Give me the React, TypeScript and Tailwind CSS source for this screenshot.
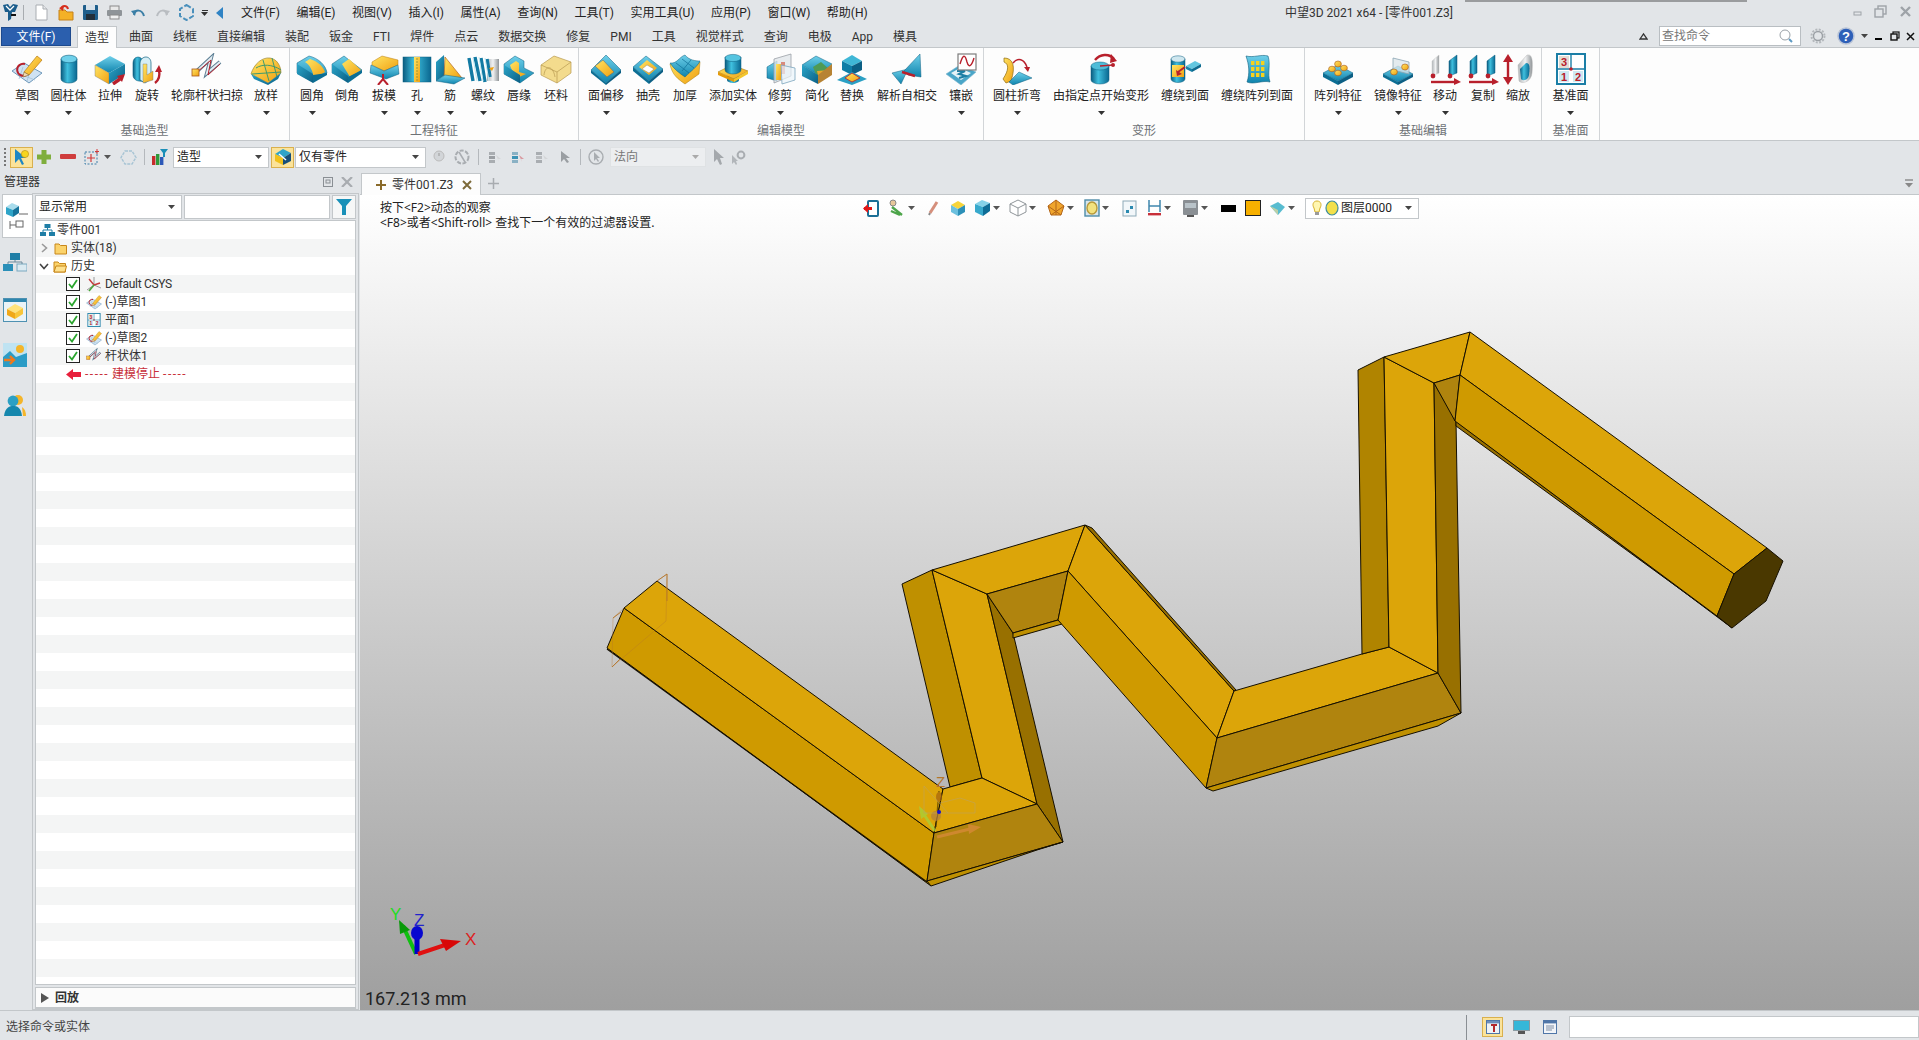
import React from 'react';

const FONT = "font-['Roboto','Noto_Sans_CJK_SC',sans-serif]";

// shared gradients for the ribbon icons
const Defs = () => (
  <svg width="0" height="0" className="absolute">
    <defs>
      <linearGradient id="blue" x1="0" y1="0" x2="0" y2="1"><stop offset="0" stopColor="#6fd0ea" /><stop offset="1" stopColor="#0f84ad" /></linearGradient>
      <linearGradient id="blueDark" x1="0" y1="0" x2="1" y2="1"><stop offset="0" stopColor="#2aa5c9" /><stop offset="1" stopColor="#0c5f84" /></linearGradient>
      <linearGradient id="cyl" x1="0" y1="0" x2="1" y2="0"><stop offset="0" stopColor="#0b5c80" /><stop offset=".4" stopColor="#3fc0df" /><stop offset="1" stopColor="#0a6790" /></linearGradient>
      <linearGradient id="yellow" x1="0" y1="0" x2="1" y2="1"><stop offset="0" stopColor="#ffe565" /><stop offset="1" stopColor="#f0a010" /></linearGradient>
      <linearGradient id="gray" x1="0" y1="0" x2="1" y2="0"><stop offset="0" stopColor="#aeb3b6" /><stop offset=".5" stopColor="#f1f2f3" /><stop offset="1" stopColor="#8f9497" /></linearGradient>
    </defs>
  </svg>
);

const RED = '#b8202c';
const EDGE = '#0d5f80';

const ICONS: Record<string, React.ReactNode> = {
  sketch: (
    <>
      <polygon points="1,18 13,10 31,20 18,30" fill="#cfe2f2" stroke="#6e98ba" />
      <path d="M6 20 L24 27 M12 14 L8 26 M20 15 L16 28" stroke="#9dbcd4" strokeWidth=".7" />
      <path d="M14 11 a6 6 0 1 0 1 11" fill="none" stroke={RED} strokeWidth="2" />
      <polygon points="13,19 26,3 31,7 18,22" fill="url(#yellow)" stroke="#b87a10" strokeWidth=".7" />
      <polygon points="13,19 12,24 18,22" fill="#f3d9b0" stroke="#8a6a30" strokeWidth=".6" />
    </>
  ),
  cylinder: (
    <>
      <path d="M8 6 V26 A8 4 0 0 0 24 26 V6Z" fill="url(#cyl)" stroke={EDGE} strokeWidth=".6" />
      <ellipse cx="16" cy="6" rx="8" ry="3.8" fill="#6fd0ea" stroke={EDGE} strokeWidth=".6" />
    </>
  ),
  extrude: (
    <>
      <polygon points="1,12 16,3 31,11 15,20" fill="url(#blue)" />
      <polygon points="1,12 15,20 15,31 1,23" fill="url(#yellow)" stroke="#777" strokeWidth=".4" />
      <polygon points="15,20 31,11 31,21 15,31" fill="url(#blueDark)" />
      <path d="M19 31 L26 26" stroke={RED} strokeWidth="3.4" />
      <polygon points="23,23 31,21 28,29" fill={RED} />
    </>
  ),
  revolve: (
    <>
      <path d="M2 10 C2 3 10 2 12 8 V28 C6 29 2 26 2 22Z" fill="url(#cyl)" stroke={EDGE} strokeWidth=".6" />
      <path d="M9 10 C10 2 20 2 20 10 V26 L14 30 L9 27Z" fill="#d5eef5" stroke={EDGE} strokeWidth=".7" />
      <polygon points="12,11 16,11 16,22 22,18 22,27 12,30" fill="url(#yellow)" stroke="#777" strokeWidth=".4" />
      <path d="M24 30 C28 27 29 22 28 17" fill="none" stroke={RED} strokeWidth="2.4" />
      <polygon points="24,19 28,12 31,19" fill={RED} />
    </>
  ),
  sweep: (
    <>
      <path d="M5 19 L20 5 L16 20 L29 9" fill="none" stroke="#5d7f94" strokeWidth="4" />
      <path d="M5 19 L20 5 L16 20 L29 9" fill="none" stroke="#e5eef3" strokeWidth="2" />
      <path d="M5 20 L20 7 L17 22 L29 11" fill="none" stroke={RED} strokeWidth="1" />
      <rect x="1" y="16" width="7" height="7" fill="url(#yellow)" stroke="#a8561a" strokeWidth=".8" />
    </>
  ),
  loft: (
    <>
      <path d="M1 21 C4 11 12 4 20 5 C27 6 31 13 31 20 L18 30Z" fill="url(#yellow)" stroke="#8e7a2a" strokeWidth=".6" />
      <path d="M6 15 C12 11 22 11 31 17 M13 7 L19 28 M22 5 L27 24 M2 21 L31 19" fill="none" stroke="#3f9a6e" strokeWidth="1" />
      <path d="M1 21 L18 30 L31 20 L28 26 L18 32 L4 26Z" fill="url(#blueDark)" />
    </>
  ),
  fillet: (
    <>
      <path d="M1 10 L13 3 C22 5 30 12 31 20 L17 29 L1 20Z" fill="url(#blue)" stroke={EDGE} strokeWidth=".5" />
      <path d="M9 9 L14 6 C21 8 27 13 29 19 L18 26 C17 18 14 12 9 9Z" fill="url(#yellow)" />
      <path d="M1 11 L17 21 V30 L1 21Z" fill="url(#blueDark)" />
      <path d="M17 22 L31 20 V22 L17 30Z" fill="#0c6e94" />
    </>
  ),
  chamfer: (
    <>
      <polygon points="1,11 13,3 31,17 17,27 1,20" fill="url(#blue)" stroke={EDGE} strokeWidth=".5" />
      <polygon points="11,11 18,6 30,17 19,24" fill="url(#yellow)" />
      <polygon points="1,11 17,23 17,30 1,20" fill="url(#blueDark)" />
      <polygon points="17,24 31,17 31,20 17,30" fill="#0c6e94" />
    </>
  ),
  draft: (
    <>
      <polygon points="4,9 14,3 30,7 30,12 16,18 4,12" fill="url(#yellow)" stroke="#b87a10" strokeWidth=".5" />
      <polygon points="3,12 16,18 30,12 31,21 18,26 2,20" fill="url(#blue)" stroke={EDGE} strokeWidth=".5" />
      <path d="M10 32 L15 26 L20 32 M15 26 V21" fill="none" stroke={RED} strokeWidth="2" />
    </>
  ),
  hole: (
    <>
      <rect x="2" y="4" width="28" height="25" fill="url(#cyl)" stroke={EDGE} strokeWidth=".5" />
      <rect x="13" y="4" width="6" height="25" fill="url(#yellow)" />
      <path d="M16 5 V28" stroke="#8b8a30" strokeWidth=".8" strokeDasharray="2 1" />
    </>
  ),
  rib: (
    <>
      <polygon points="2,9 10,2 11,22 2,28" fill="url(#blueDark)" />
      <polygon points="11,4 28,25 10,25" fill="url(#yellow)" stroke="#a8561a" strokeWidth=".6" />
      <polygon points="2,28 11,22 31,25 20,31" fill="url(#blue)" stroke={EDGE} strokeWidth=".5" />
    </>
  ),
  thread: (
    <>
      <rect x="20" y="6" width="12" height="22" fill="url(#gray)" />
      <path d="M2 5 L6 28 M8 4 L13 28 M14 5 L18 29 M20 6 L23 24" stroke="#127aa3" strokeWidth="3.4" />
      <path d="M6 5 L10 28 M12 4 L16 28 M18 5 L22 28" stroke="#bfe8f2" strokeWidth="1" />
      <polygon points="22,15 27,14 25,18" fill="#f0a010" />
    </>
  ),
  lip: (
    <>
      <path d="M1 11 L12 3 L21 8 V15 L31 20 L17 30 L1 21Z" fill="url(#blue)" stroke={EDGE} strokeWidth=".5" />
      <path d="M7 12 L13 8 L16 10 V19 L23 21 L16 24 C11 21 8 16 7 12Z" fill="url(#yellow)" />
      <path d="M1 12 L17 22 V30 L1 21Z" fill="url(#blueDark)" />
    </>
  ),
  stock: (
    <>
      <polygon points="1,12 14,3 31,9 31,20 17,30 1,22" fill="#f3db8d" stroke="#b79a50" strokeWidth=".7" />
      <path d="M1 12 L17 19 L31 9 M17 19 V30 M4 22 C5 12 13 12 15 24" fill="none" stroke="#b79a50" strokeWidth=".7" />
    </>
  ),
  offset: (
    <>
      <polygon points="1,17 16,2 31,17 16,30" fill="url(#blue)" stroke={EDGE} strokeWidth=".5" />
      <polygon points="5,13 13,7 24,19 17,24" fill="url(#yellow)" stroke="#666" strokeWidth=".5" />
      <polygon points="1,17 16,30 16,32 1,20" fill="#0c6e94" />
      <polygon points="16,30 31,17 31,20 16,32" fill="#0c5f84" />
    </>
  ),
  shell: (
    <>
      <polygon points="1,14 14,3 31,16 17,28" fill="url(#blue)" stroke={EDGE} strokeWidth=".5" />
      <polygon points="7,14 15,7 25,15 17,22" fill="url(#yellow)" />
      <polygon points="10,16 15,12 22,16 17,20" fill="#fff" stroke="#777" strokeWidth=".4" />
      <polygon points="1,14 17,28 17,31 1,18" fill="#0c6e94" />
      <polygon points="17,28 31,16 31,19 17,31" fill="#0c5f84" />
    </>
  ),
  thicken: (
    <>
      <path d="M1 11 C8 12 10 5 16 3 C20 8 26 9 31 9 L30 21 L16 31 C9 26 3 22 1 11Z" fill="url(#yellow)" stroke="#a67a10" strokeWidth=".5" />
      <path d="M1 10 C8 11 10 4 16 2 C20 7 26 8 31 8 C28 14 22 18 16 24 C10 20 5 16 1 10Z" fill="url(#blue)" stroke={EDGE} strokeWidth=".5" />
      <path d="M7 10 L20 20 M13 6 L25 15 M13 18 L22 7" stroke="#0f7098" strokeWidth=".7" />
    </>
  ),
  addsolid: (
    <>
      <path d="M10 20 V27 A6 3 0 0 0 22 27 V20Z" fill="url(#cyl)" />
      <polygon points="1,19 15,12 31,18 17,26" fill="url(#yellow)" stroke="#a67a10" strokeWidth=".6" />
      <polygon points="1,19 17,26 17,29 1,22" fill="#e69a08" />
      <polygon points="17,26 31,18 31,21 17,29" fill="#f3c62a" />
      <path d="M8 4 V17 A8 4 0 0 0 24 17 V4Z" fill="url(#cyl)" stroke={EDGE} strokeWidth=".5" />
      <ellipse cx="16" cy="5" rx="8" ry="3.6" fill="#55c4e0" stroke={EDGE} strokeWidth=".5" />
    </>
  ),
  trim: (
    <>
      <polygon points="3,14 13,8 13,28 3,25" fill="url(#blue)" stroke={EDGE} strokeWidth=".5" />
      <polygon points="10,6 27,1 27,23 10,30" fill="#dfe4e8" fillOpacity=".75" stroke="#9aa0a6" strokeWidth=".8" />
      <rect x="12" y="11" width="5" height="16" fill="url(#yellow)" />
      <rect x="17" y="9" width="4" height="12" fill="#d98a7d" />
      <polygon points="17,12 31,15 31,27 18,31" fill="#e9f4f9" fillOpacity=".7" stroke="#7ba5bd" strokeWidth=".8" />
    </>
  ),
  simplify: (
    <>
      <polygon points="1,12 15,3 31,11 17,22" fill="url(#blue)" stroke={EDGE} strokeWidth=".5" />
      <polygon points="12,14 20,9 29,17 22,26 16,24" fill="#4f9a55" />
      <polygon points="16,18 29,17 27,24 18,27" fill="#e8a52a" />
      <polygon points="1,12 17,22 17,31 1,23" fill="url(#blueDark)" />
      <polygon points="17,22 31,11 31,22 17,31" fill="#b78333" />
    </>
  ),
  replace: (
    <>
      <polygon points="6,8 16,2 26,8 16,13" fill="#3fb7d6" />
      <polygon points="6,8 16,13 16,22 6,17" fill="#0d7da6" />
      <polygon points="16,13 26,8 26,17 16,22" fill="#0b5f84" />
      <polygon points="1,27 16,19 31,26 16,32" fill="#2ba0c4" />
      <polygon points="9,25 16,20 24,25 16,29" fill="url(#yellow)" stroke={RED} strokeWidth=".8" />
    </>
  ),
  selfint: (
    <>
      <polygon points="1,20 17,16 10,31" fill="url(#blue)" stroke={EDGE} strokeWidth=".5" />
      <polygon points="13,18 29,1 30,24 17,22" fill="url(#blue)" stroke={EDGE} strokeWidth=".5" />
      <path d="M11 19 L24 23" stroke={RED} strokeWidth="2.4" />
    </>
  ),
  emboss: (
    <>
      <polygon points="1,21 15,12 31,19 16,32" fill="#4aa6c8" stroke="#7fb7d0" strokeWidth=".6" />
      <polygon points="6,20 15,15 26,20 16,27" fill="#e5f2f7" />
      <path d="M12 18 L20 18 L14 21 L21 23 L14 25" fill="none" stroke="#1c7ea5" strokeWidth="2" />
      <rect x="13" y="1" width="18" height="16" fill="#fff" stroke="#7d7d7d" strokeWidth="1.2" />
      <path d="M15 11 C18 1 20 1 22 9 C24 16 27 12 29 5" fill="none" stroke={RED} strokeWidth="1.4" />
    </>
  ),
  bend: (
    <>
      <path d="M3 5 C12 5 15 13 10 28 L5 30 L2 26 C8 17 8 11 3 9Z" fill="url(#yellow)" stroke="#8e6a10" strokeWidth=".7" />
      <polygon points="8,29 18,19 31,25 12,32" fill="url(#blue)" stroke={EDGE} strokeWidth=".5" />
      <path d="M12 10 C17 4 23 6 26 14" fill="none" stroke={RED} strokeWidth="1.5" />
      <polygon points="23,14 29,14 27,19" fill={RED} />
    </>
  ),
  deform: (
    <>
      <path d="M6 13 V27 A9 4 0 0 0 24 27 V13Z" fill="url(#cyl)" stroke={EDGE} strokeWidth=".5" />
      <ellipse cx="15" cy="13" rx="9" ry="4" fill="#4fbcd8" stroke={EDGE} strokeWidth=".5" />
      <path d="M10 7 C15 1 24 0 29 6" fill="none" stroke={RED} strokeWidth="2.4" />
      <polygon points="26,1 32,8 25,10" fill={RED} />
      <path d="M15 13 L28 12" stroke={RED} strokeWidth="1.4" />
      <circle cx="28" cy="12" r="2" fill={RED} />
    </>
  ),
  wrap: (
    <>
      <path d="M2 6 V26 A7 3.5 0 0 0 16 26 V6Z" fill="url(#cyl)" stroke={EDGE} strokeWidth=".5" />
      <ellipse cx="9" cy="6" rx="7" ry="3.2" fill="#cfe7ef" stroke={EDGE} strokeWidth=".5" />
      <rect x="3" y="12" width="12" height="12" fill="url(#yellow)" />
      <path d="M9 19 L16 14" stroke={RED} strokeWidth="2" />
      <polygon points="7,17 13,21 8,23" fill={RED} />
      <polygon points="17,13 26,8 32,11 23,16" fill="#63c7e0" />
      <polygon points="17,13 23,16 23,19 17,16" fill="#1580a8" />
      <polygon points="23,16 32,11 32,14 23,19" fill="#0e6b90" />
    </>
  ),
  wraparr: (
    <>
      <path d="M5 3 C13 5 20 1 27 3 C30 12 26 20 29 29 C21 27 13 32 6 29 C9 20 8 12 5 3Z" fill="url(#blue)" stroke={EDGE} strokeWidth=".6" />
      <g fill="#f6d21e">
        <rect x="10" y="8" width="3.4" height="4" /><rect x="15" y="8" width="3.4" height="4" /><rect x="20" y="8" width="3.4" height="4" />
        <rect x="10" y="14" width="3.4" height="4" /><rect x="15" y="14" width="3.4" height="4" /><rect x="20" y="14" width="3.4" height="4" />
        <rect x="10" y="20" width="3.4" height="4" /><rect x="15" y="20" width="3.4" height="4" /><rect x="20" y="20" width="3.4" height="4" />
      </g>
    </>
  ),
  pattern: (
    <>
      <polygon points="1,20 16,12 31,20 16,28" fill="url(#blue)" stroke={EDGE} strokeWidth=".5" />
      <polygon points="1,20 16,28 16,32 1,24" fill="#0c6e94" />
      <polygon points="16,28 31,20 31,24 16,32" fill="#0c5f84" />
      <g fill="url(#yellow)" stroke="#a8561a" strokeWidth=".6">
        <ellipse cx="10" cy="16" rx="3.4" ry="2.8" /><ellipse cx="16" cy="11" rx="3.4" ry="3" /><ellipse cx="22" cy="15" rx="3.4" ry="2.8" /><ellipse cx="16" cy="20" rx="3.4" ry="2.8" />
      </g>
    </>
  ),
  mirror: (
    <>
      <polygon points="1,21 16,13 31,21 16,29" fill="url(#blue)" stroke={EDGE} strokeWidth=".5" />
      <polygon points="1,21 16,29 16,32 1,24" fill="#0c6e94" />
      <polygon points="16,29 31,21 31,24 16,32" fill="#0c5f84" />
      <polygon points="11,5 27,9 27,21 11,17" fill="#d9e4ea" fillOpacity=".75" stroke="#8ba5b3" strokeWidth=".8" />
      <g fill="url(#yellow)" stroke="#a8561a" strokeWidth=".6"><ellipse cx="12" cy="19" rx="3.4" ry="3" /><ellipse cx="23" cy="14" rx="3.4" ry="3" /></g>
    </>
  ),
  move: (
    <>
      <path d="M3 8 L10 2 V20 L3 23Z" fill="url(#gray)" stroke="#c8c8c8" strokeWidth=".5" />
      <path d="M20 8 L28 2 V20 L20 23Z" fill="url(#cyl)" stroke={EDGE} strokeWidth=".5" />
      <circle cx="4" cy="23" r="2.4" fill={RED} /><circle cx="21" cy="23" r="2.4" fill={RED} />
      <path d="M2 29 H26" stroke={RED} strokeWidth="2.4" />
      <polygon points="25,25 32,29 25,32" fill={RED} />
    </>
  ),
  copy: (
    <>
      <path d="M3 8 L10 2 V20 L3 23Z" fill="url(#cyl)" stroke={EDGE} strokeWidth=".5" />
      <path d="M20 8 L28 2 V20 L20 23Z" fill="url(#cyl)" stroke={EDGE} strokeWidth=".5" />
      <circle cx="4" cy="23" r="2.4" fill={RED} /><circle cx="21" cy="23" r="2.4" fill={RED} />
      <path d="M2 29 H26" stroke={RED} strokeWidth="2.4" />
      <polygon points="25,25 32,29 25,32" fill={RED} />
    </>
  ),
  scale: (
    <>
      <path d="M6 4 V28" stroke={RED} strokeWidth="2.4" />
      <polygon points="1,9 6,1 11,9" fill={RED} /><polygon points="1,24 6,32 11,24" fill={RED} />
      <path d="M16 12 L25 2 C30 1 31 6 30 20 C29 30 19 31 17 28Z" fill="url(#gray)" stroke="#bbb" strokeWidth=".5" />
      <path d="M18 16 L24 10 C28 10 28 14 27 22 C26 28 20 28 19 26Z" fill="url(#cyl)" />
    </>
  ),
  plane: (
    <>
      <rect x="2" y="1" width="28" height="30" fill="#fff" stroke="#1b7ea6" strokeWidth="2" />
      <path d="M16 2 V16 H2 M16 16 H30" stroke="#1b7ea6" strokeWidth="1.4" fill="none" />
      <circle cx="16" cy="16" r="1.8" fill={RED} />
      <rect x="4" y="3" width="10" height="12" fill="#e3dcd3" /><rect x="4" y="18" width="10" height="11" fill="#cfe9f2" /><rect x="18" y="18" width="10" height="11" fill="#cfe9f2" />
      <text x="9" y="13" textAnchor="middle" fontSize="11" fontWeight="700" fill={RED} fontFamily="Liberation Sans">3</text>
      <text x="9" y="28" textAnchor="middle" fontSize="11" fontWeight="700" fill={RED} fontFamily="Liberation Sans">1</text>
      <text x="23" y="28" textAnchor="middle" fontSize="11" fontWeight="700" fill={RED} fontFamily="Liberation Sans">2</text>
    </>
  ),
};

const Icon = ({ name, size = 32 }: { name: string; size?: number }) => (
  <svg width={size} height={size} viewBox="0 0 32 32">{ICONS[name]}</svg>
);

const Caret = ({ className = 'text-[#444]' }: { className?: string }) => (
  <svg width="7" height="4" viewBox="0 0 7 4" className={`shrink-0 ${className}`}><polygon points="0,0 7,0 3.5,4" fill="currentColor" /></svg>
);

interface RibbonItem { label: string; icon: string; w: string; arrow?: boolean }
interface RibbonGroup { label: string; w: string; pad: string; items: RibbonItem[] }

const GROUPS: RibbonGroup[] = [
  {
    label: '基础造型', w: 'w-[290px]', pad: 'pl-[6px]', items: [
      { label: '草图', icon: 'sketch', w: 'w-[42px]', arrow: true },
      { label: '圆柱体', icon: 'cylinder', w: 'w-[41px]', arrow: true },
      { label: '拉伸', icon: 'extrude', w: 'w-[42px]' },
      { label: '旋转', icon: 'revolve', w: 'w-[32px]' },
      { label: '轮廓杆状扫掠', icon: 'sweep', w: 'w-[88px]', arrow: true },
      { label: '放样', icon: 'loft', w: 'w-[30px]', arrow: true },
    ],
  },
  {
    label: '工程特征', w: 'w-[289px]', pad: 'pl-[5px]', items: [
      { label: '圆角', icon: 'fillet', w: 'w-[34px]', arrow: true },
      { label: '倒角', icon: 'chamfer', w: 'w-[36px]' },
      { label: '拔模', icon: 'draft', w: 'w-[38px]', arrow: true },
      { label: '孔', icon: 'hole', w: 'w-[28px]', arrow: true },
      { label: '筋', icon: 'rib', w: 'w-[38px]', arrow: true },
      { label: '螺纹', icon: 'thread', w: 'w-[28px]', arrow: true },
      { label: '唇缘', icon: 'lip', w: 'w-[44px]' },
      { label: '坯料', icon: 'stock', w: 'w-[30px]' },
    ],
  },
  {
    label: '编辑模型', w: 'w-[405px]', pad: 'pl-[4px]', items: [
      { label: '面偏移', icon: 'offset', w: 'w-[46px]', arrow: true },
      { label: '抽壳', icon: 'shell', w: 'w-[38px]' },
      { label: '加厚', icon: 'thicken', w: 'w-[36px]' },
      { label: '添加实体', icon: 'addsolid', w: 'w-[60px]', arrow: true },
      { label: '修剪', icon: 'trim', w: 'w-[34px]', arrow: true },
      { label: '简化', icon: 'simplify', w: 'w-[40px]' },
      { label: '替换', icon: 'replace', w: 'w-[30px]' },
      { label: '解析自相交', icon: 'selfint', w: 'w-[80px]' },
      { label: '镶嵌', icon: 'emboss', w: 'w-[28px]', arrow: true },
    ],
  },
  {
    label: '变形', w: 'w-[321px]', pad: 'pl-[4px]', items: [
      { label: '圆柱折弯', icon: 'bend', w: 'w-[58px]', arrow: true },
      { label: '由指定点开始变形', icon: 'deform', w: 'w-[110px]', arrow: true },
      { label: '缠绕到面', icon: 'wrap', w: 'w-[58px]' },
      { label: '缠绕阵列到面', icon: 'wraparr', w: 'w-[86px]' },
    ],
  },
  {
    label: '基础编辑', w: 'w-[237px]', pad: 'pl-[5px]', items: [
      { label: '阵列特征', icon: 'pattern', w: 'w-[56px]', arrow: true },
      { label: '镜像特征', icon: 'mirror', w: 'w-[64px]', arrow: true },
      { label: '移动', icon: 'move', w: 'w-[30px]', arrow: true },
      { label: '复制', icon: 'copy', w: 'w-[46px]' },
      { label: '缩放', icon: 'scale', w: 'w-[24px]' },
    ],
  },
  {
    label: '基准面', w: 'w-[58px]', pad: 'pl-0', items: [
      { label: '基准面', icon: 'plane', w: 'w-[57px]', arrow: true },
    ],
  },
];

const MENUS = ['文件(F)', '编辑(E)', '视图(V)', '插入(I)', '属性(A)', '查询(N)', '工具(T)', '实用工具(U)', '应用(P)', '窗口(W)', '帮助(H)'];
const TABS = ['曲面', '线框', '直接编辑', '装配', '钣金', 'FTI', '焊件', '点云', '数据交换', '修复', 'PMI', '工具', '视觉样式', '查询', '电极', 'App', '模具'];

const QuickBar = () => (
  <div className="flex items-center w-[236px] pl-[2px] gap-0">
    <svg width="17" height="19" viewBox="0 0 17 19">
      <path d="M1 2 L6 1 L8 4 L11 1 L16 2 L13 9 L10 9 L9 16 L6 18 L6 9 L3 9Z" fill="#1a5d8c" />
      <path d="M4 3 L8 7 L12 3" fill="none" stroke="#fff" strokeWidth="1.3" />
      <path d="M9 12 L14 12" stroke="#111" strokeWidth="2" />
    </svg>
    <div className="w-px h-[15px] bg-[#a8acb0] ml-[4px] mr-[10px]" />
    <svg width="15" height="17" viewBox="0 0 15 17" className="mr-[9px]"><path d="M2 1 H9 L13 5 V16 H2Z" fill="#fff" stroke="#a9adb2" /><path d="M9 1 V5 H13" fill="#e6e8ea" stroke="#a9adb2" /></svg>
    <svg width="17" height="18" viewBox="0 0 17 18" className="mr-[7px]"><path d="M1 6 H7 L9 8 H15 V16 H1Z" fill="#f4b127" stroke="#c5811a" /><path d="M3 5 C4 1 9 1 10 5" fill="none" stroke="#d62f1e" strokeWidth="2" /><polygon points="1,4 6,2 5,7" fill="#d62f1e" /></svg>
    <svg width="17" height="17" viewBox="0 0 17 17" className="mr-[7px]"><rect x="1" y="1" width="15" height="15" rx="1" fill="#1f5e8b" /><rect x="4" y="1" width="9" height="5" fill="#d8e2ea" /><rect x="4" y="10" width="9" height="6" fill="#222f3a" /></svg>
    <svg width="17" height="15" viewBox="0 0 17 15" className="mr-[8px]"><rect x="4" y="1" width="9" height="5" fill="#e8e8e8" stroke="#8a8a8a" /><rect x="1" y="5" width="15" height="6" rx="1" fill="#8f9498" /><rect x="4" y="10" width="9" height="4" fill="#f0f0f0" stroke="#8a8a8a" /></svg>
    <svg width="15" height="11" viewBox="0 0 15 11" className="mr-[9px]"><path d="M3 8 C4 2 11 2 13 9" fill="none" stroke="#3b7fa6" strokeWidth="2" /><polygon points="0,4 5,3 4,9" fill="#3b7fa6" /></svg>
    <svg width="15" height="11" viewBox="0 0 15 11" className="mr-[8px]"><path d="M12 8 C11 2 4 2 2 9" fill="none" stroke="#b9bdc1" strokeWidth="2" /><polygon points="15,4 10,3 11,9" fill="#b9bdc1" /></svg>
    <svg width="17" height="17" viewBox="0 0 17 17" className="mr-[6px]"><polygon points="8.5,1 15,5 15,12 8.5,16 2,12 2,5" fill="none" stroke="#4a90bc" strokeWidth="2" strokeDasharray="5 2" /></svg>
    <div className="flex flex-col items-center gap-[1px] mr-[8px]"><div className="w-[6px] h-px bg-[#333]" /><Caret className="text-[#333]" /></div>
    <svg width="7" height="12" viewBox="0 0 7 12"><polygon points="7,0 7,12 0,6" fill="#2f83c4" /></svg>
  </div>
);

const TopBar = () => (
  <div className="h-[25px] flex items-center relative shrink-0">
    <QuickBar />
    <div className="flex gap-[16.5px] ml-[5px] text-xs text-[#222]">
      {MENUS.map(m => <span key={m}>{m}</span>)}
    </div>
    <span className="absolute left-[1285px] top-[5px] text-xs text-[#333]">中望3D 2021 x64 - [零件001.Z3]</span>
    <div className="absolute left-[1465px] top-0 w-[282px] h-[2px] bg-[#9a9c9e]" />
    <div className="absolute right-[7px] top-[5px] flex items-center gap-[12px] text-[#9ea3a8]">
      <svg width="9" height="9" viewBox="0 0 9 9"><rect x="1" y="5" width="7" height="3" fill="none" stroke="currentColor" /></svg>
      <svg width="13" height="13" viewBox="0 0 13 13"><rect x="4" y="1" width="8" height="8" fill="none" stroke="currentColor" strokeWidth="1.4" /><rect x="1" y="4" width="8" height="8" fill="#e2e5e8" stroke="currentColor" strokeWidth="1.4" /></svg>
      <svg width="13" height="13" viewBox="0 0 13 13"><path d="M2 2 L11 11 M11 2 L2 11" stroke="currentColor" strokeWidth="2.4" /></svg>
    </div>
  </div>
);

const TabBar = () => (
  <div className="h-[22px] flex items-end relative shrink-0">
    <div className="ml-[1px] mb-[1px] w-[70px] h-[19px] flex items-center justify-center bg-[#2b5fae] border border-[#1d4a8e] text-xs text-white">文件(F)</div>
    <div className="ml-[6px] w-[40px] h-[22px] -mb-px relative z-10 flex items-center justify-center bg-[#fdfdfd] border border-b-0 border-[#c3c7ca] text-xs text-[#333]">造型</div>
    <div className="flex h-[21px] ml-[2px] items-center text-xs text-[#333]">
      {TABS.map(t => <span key={t} className="px-[10px]">{t}</span>)}
    </div>
    <div className="absolute left-[1639px] top-[1px] h-[20px] flex items-center">
      <svg width="9" height="8" viewBox="0 0 9 8"><path d="M1 7 L4.5 2 L8 7Z" fill="none" stroke="#333" strokeWidth="1.3" /></svg>
      <div className="ml-[11px] w-[142px] h-[20px] bg-white border border-[#b9bec2] flex items-center justify-between pl-[2px] pr-[7px] text-xs text-[#777]">
        查找命令
        <svg width="14" height="14" viewBox="0 0 14 14"><circle cx="6" cy="6" r="5" fill="none" stroke="#9aa1a7" /><path d="M10 10 L13 13" stroke="#5d99c2" strokeWidth="2" /></svg>
      </div>
      <svg width="16" height="16" viewBox="0 0 16 16" className="ml-[9px]"><circle cx="8" cy="8" r="4.5" fill="none" stroke="#9a9fa4" strokeWidth="1.4" /><circle cx="8" cy="8" r="6.5" fill="none" stroke="#b4b8bc" strokeWidth="2" strokeDasharray="2 1.4" /></svg>
      <svg width="18" height="18" viewBox="0 0 18 18" className="ml-[11px]"><circle cx="9" cy="9" r="8" fill="#2d5fb8" stroke="#b8c3d6" strokeWidth="1.5" /><text x="9" y="13.5" textAnchor="middle" fontSize="13" fontWeight="700" fill="#fff" fontFamily="Liberation Sans">?</text></svg>
      <Caret className="ml-[6px] text-[#444]" />
      <div className="ml-[7px] w-[7px] h-[2px] bg-black mt-[6px]" />
      <svg width="10" height="10" viewBox="0 0 10 10" className="ml-[8px]"><rect x="3" y="1" width="6" height="6" fill="none" stroke="#111" strokeWidth="1.2" /><rect x="1" y="3" width="6" height="6" fill="#e2e5e8" stroke="#111" strokeWidth="1.4" /></svg>
      <svg width="9" height="9" viewBox="0 0 9 9" className="ml-[6px]"><path d="M1 1 L8 8 M8 1 L1 8" stroke="#111" strokeWidth="1.5" /></svg>
    </div>
  </div>
);

const Ribbon = () => (
  <div className="h-[94px] shrink-0 flex bg-[#fdfdfd] border-y border-[#c3c7ca]">
    {GROUPS.map(g => (
      <div key={g.label} className={`${g.w} h-full flex flex-col border-r border-[#d2d5d8]`}>
        <div className={`flex h-[74px] ${g.pad}`}>
          {g.items.map(it => (
            <div key={it.label} className={`${it.w} flex flex-col items-center shrink-0`}>
              <div className="h-[39px] pt-[5px] flex justify-center"><Icon name={it.icon} /></div>
              <span className="text-xs leading-[18px] whitespace-nowrap text-[#222]">{it.label}</span>
              {it.arrow && <Caret className="mt-[6px] text-[#333]" />}
            </div>
          ))}
        </div>
        <div className="flex-1 flex items-center justify-center text-xs text-[#6e7276]">{g.label}</div>
      </div>
    ))}
  </div>
);

const Combo = ({ text, className, muted }: { text: string; className: string; muted?: boolean }) => (
  <div className={`flex items-center justify-between pl-[3px] pr-[6px] border text-xs shrink-0 ${muted ? 'bg-[#eceef0] border-[#dfe2e4] text-[#777]' : 'bg-white border-[#c3c7ca] text-[#222]'} ${className}`}>
    {text}
    <Caret className={muted ? 'text-[#aaa]' : 'text-[#444]'} />
  </div>
);

const HiButton = ({ children }: { children: React.ReactNode }) => (
  <div className="w-[23px] h-[21px] flex items-center justify-center bg-[#fbe39a] border border-[#d9b04e] shrink-0">{children}</div>
);

const Sep = ({ className }: { className: string }) => <div className={`w-px h-[16px] bg-[#b4b8bc] shrink-0 ${className}`} />;

const Toolbar = () => (
  <div className="h-[30px] shrink-0 flex items-center pl-[4px] pt-[2px]">
    <div className="w-[2px] h-[18px] border-l-2 border-dotted border-[#777] mr-[4px]" />
    <HiButton>
      <svg width="17" height="18" viewBox="0 0 17 18"><polygon points="2,1 2,15 6,11 9,17 11,16 8,10 13,10" fill="#1e87c4" /><circle cx="12" cy="6" r="3.6" fill="#f7d51e" stroke="#b88c10" strokeWidth=".6" /></svg>
    </HiButton>
    <svg width="16" height="16" viewBox="0 0 16 16" className="ml-[3px]"><path d="M8 1 V15 M1 8 H15" stroke="#7fae3d" strokeWidth="5" /></svg>
    <svg width="16" height="6" viewBox="0 0 16 6" className="ml-[8px]"><rect width="16" height="5" rx="1" fill="#cf3d3d" /></svg>
    <svg width="16" height="16" viewBox="0 0 16 16" className="ml-[8px]"><rect x="1" y="3" width="12" height="12" fill="none" stroke="#3f7fa8" strokeDasharray="2 1.5" /><path d="M7 5 V13 M3 9 H11" stroke="#d23a3a" strokeWidth="1.2" /><path d="M13 0 V5 M11 2.5 H15" stroke="#d23a3a" /></svg>
    <Caret className="ml-[4px] text-[#555]" />
    <svg width="17" height="17" viewBox="0 0 17 17" className="ml-[9px]"><polygon points="5,2 12,2 16,8.5 12,15 5,15 1,8.5" fill="none" stroke="#a7c4d4" strokeWidth="1.4" strokeDasharray="3 1" /></svg>
    <Sep className="ml-[7px]" />
    <svg width="18" height="18" viewBox="0 0 18 18" className="ml-[6px]">
      <rect x="1" y="8" width="3.4" height="9" fill="#c62c2c" /><rect x="5" y="6" width="3.4" height="11" fill="#2f9a3a" /><rect x="9" y="9" width="3.4" height="8" fill="#2c58b8" />
      <polygon points="9,1 17,1 14,5 14,9 12,9 12,5" fill="#1b8fb8" />
    </svg>
    <Combo text="造型" className="w-[96px] h-[21px] ml-[4px]" />
    <div className="ml-[2px]"><HiButton>
      <svg width="18" height="18" viewBox="0 0 18 18"><polygon points="1,6 9,1 17,5 9,10" fill="#2fa4c8" /><polygon points="1,6 9,10 9,17 1,13" fill="#f0c11a" /><polygon points="9,10 17,5 17,13 9,17" fill="#174f78" /><path d="M5 6 L12 12" stroke="#fff" strokeWidth="1.5" /></svg>
    </HiButton></div>
    <Combo text="仅有零件" className="w-[131px] h-[21px] ml-[1px]" />
    <svg width="12" height="14" viewBox="0 0 12 14" className="ml-[7px]"><circle cx="6" cy="6" r="5" fill="#d2d5d8" stroke="#bbb" /><path d="M6 3 V6" stroke="#999" /></svg>
    <svg width="16" height="16" viewBox="0 0 16 16" className="ml-[9px]"><circle cx="8" cy="8" r="6.5" fill="none" stroke="#a9adb1" strokeWidth="2" strokeDasharray="4 1.5" /><path d="M5 3 L11 13" stroke="#a9adb1" strokeWidth="1.5" /></svg>
    <Sep className="ml-[8px]" />
    <svg width="13" height="14" viewBox="0 0 13 14" className="ml-[9px]"><rect x="1" y="2" width="6" height="3" fill="#a9adb1" /><rect x="1" y="6" width="6" height="3" fill="#9a9ea2" /><rect x="1" y="10" width="6" height="3" fill="#a9adb1" /><polygon points="8,5 13,9 10,9 11,12" fill="#d4d6d8" /></svg>
    <svg width="13" height="14" viewBox="0 0 13 14" className="ml-[10px]"><rect x="1" y="2" width="6" height="3" fill="#8ab1c4" /><rect x="1" y="6" width="6" height="3" fill="#3d93b5" /><rect x="1" y="10" width="6" height="3" fill="#8ab1c4" /><polygon points="8,5 13,9 10,9 11,12" fill="#d99aa0" /></svg>
    <svg width="13" height="14" viewBox="0 0 13 14" className="ml-[11px]"><rect x="1" y="2" width="6" height="3" fill="#a9adb1" /><rect x="1" y="6" width="6" height="3" fill="#b9bcbf" /><rect x="1" y="10" width="6" height="3" fill="#a9adb1" /><polygon points="8,5 13,9 10,9 11,12" fill="#d4d6d8" /></svg>
    <svg width="12" height="14" viewBox="0 0 12 14" className="ml-[11px]"><polygon points="2,1 2,12 5,9 8,13 10,12 7,8 11,8" fill="#9a9ea2" /></svg>
    <Sep className="ml-[9px]" />
    <svg width="16" height="16" viewBox="0 0 16 16" className="ml-[7px]"><circle cx="8" cy="8" r="7" fill="none" stroke="#a9adb1" strokeWidth="1.4" /><polygon points="6,3 6,12 8,10 10,13 11,12 9,9 12,9" fill="#a9adb1" /></svg>
    <Combo text="法向" muted className="w-[96px] h-[20px] ml-[6px]" />
    <svg width="12" height="18" viewBox="0 0 12 18" className="ml-[7px]"><polygon points="1,1 1,14 4,11 7,17 9,16 7,10 11,10" fill="#a4a8ac" /></svg>
    <svg width="16" height="16" viewBox="0 0 16 16" className="ml-[6px]"><circle cx="10" cy="6" r="3.4" fill="none" stroke="#a9adb1" strokeWidth="2" /><polygon points="1,6 1,15 3,13 5,16 6,15 5,12 7,12" fill="#b2b6ba" /></svg>
  </div>
);

const Check = () => (
  <svg width="14" height="14" viewBox="0 0 14 14" className="shrink-0">
    <rect x=".5" y=".5" width="13" height="13" fill="#fff" stroke="#222" />
    <path d="M3 7 L6 10.5 L11 3" fill="none" stroke="#2aa52e" strokeWidth="1.8" />
  </svg>
);

const Folder = ({ open }: { open?: boolean }) => (
  <svg width="14" height="13" viewBox="0 0 14 13" className="shrink-0">
    <path d="M1 2 H5 L6.5 3.5 H12.5 V12 H1Z" fill="#fbd36b" stroke="#c8871a" />
    {open && <path d="M1 12 L3 6 H13.5 L12 12Z" fill="#fde08c" stroke="#c8871a" />}
  </svg>
);

const TreeText = ({ children, className = '' }: { children: React.ReactNode; className?: string }) => (
  <span className={`text-xs whitespace-nowrap text-[#333] ${className}`}>{children}</span>
);

const FeatureRow = ({ icon, label, tight }: { icon: React.ReactNode; label: string; tight?: boolean }) => (
  <div className="flex items-center pl-[30px] h-full">
    <Check />
    <div className="ml-[5px] w-[18px] flex justify-center">{icon}</div>
    <TreeText className={tight ? 'ml-[2px] tracking-[-0.3px]' : 'ml-[2px]'}>{label}</TreeText>
  </div>
);

const TreeRows = () => {
  const rows: React.ReactNode[] = [
    <div className="flex items-center pl-[4px] h-full">
      <svg width="15" height="12" viewBox="0 0 15 12" className="shrink-0"><rect x="4.5" y="0" width="6" height="4" fill="#1f7ea6" /><rect x="0" y="8" width="6" height="4" fill="#1f7ea6" /><rect x="9" y="8" width="6" height="4" fill="#1f7ea6" /><path d="M7.5 4 V6 M3 8 V6 H12 V8" fill="none" stroke="#1f7ea6" /></svg>
      <TreeText className="ml-[2px]">零件001</TreeText>
    </div>,
    <div className="flex items-center pl-[5px] h-full">
      <svg width="7" height="10" viewBox="0 0 7 10" className="shrink-0"><path d="M1 1 L5.5 5 L1 9" fill="none" stroke="#9a9a9a" strokeWidth="1.6" /></svg>
      <div className="ml-[6px]"><Folder /></div>
      <TreeText className="ml-[3px]">实体(18)</TreeText>
    </div>,
    <div className="flex items-center pl-[3px] h-full">
      <svg width="10" height="7" viewBox="0 0 10 7" className="shrink-0"><path d="M1 1 L5 5.5 L9 1" fill="none" stroke="#444" strokeWidth="1.6" /></svg>
      <div className="ml-[4px]"><Folder open /></div>
      <TreeText className="ml-[4px]">历史</TreeText>
    </div>,
    <FeatureRow label="Default CSYS" tight icon={
      <svg width="16" height="16" viewBox="0 0 16 16"><path d="M8 1 V9 L15 12 M8 9 L1 14" fill="none" stroke="#999" /><path d="M8 9 L3 3" stroke="#c53a3a" strokeWidth="1.4" /><path d="M8 9 L14 7" stroke="#c53a3a" strokeWidth="1.4" /><path d="M8 9 L3 15" stroke="#4aa53a" strokeWidth="1.6" /></svg>
    } />,
    <FeatureRow label="(-)草图1" icon={<Icon name="sketch" size={16} />} />,
    <FeatureRow label="平面1" icon={<Icon name="plane" size={14} />} />,
    <FeatureRow label="(-)草图2" icon={<Icon name="sketch" size={16} />} />,
    <FeatureRow label="杆状体1" icon={<Icon name="sweep" size={16} />} />,
    <div className="flex items-center pl-[30px] h-full">
      <svg width="15" height="11" viewBox="0 0 15 11" className="shrink-0"><polygon points="0,5.5 7,0 7,3 15,3 15,8 7,8 7,11" fill="#e8203c" /></svg>
      <span className="ml-[4px] text-xs whitespace-nowrap text-[#c8303a]">
        <span className="tracking-[1.5px]">-----</span> 建模停止 <span className="tracking-[1.5px]">-----</span>
      </span>
    </div>,
  ];
  return (
    <div className="flex-1 overflow-hidden bg-white">
      {Array.from({ length: 42 }, (_, i) => (
        <div key={i} className={`h-[18px] ${i % 2 === 1 ? 'bg-[#f4f5f5]' : 'bg-white'}`}>{rows[i]}</div>
      ))}
    </div>
  );
};

const SIDE_ICONS = (
  <div className="w-[30px] flex flex-col items-center shrink-0 pt-[1px]">
    <div className="-mr-[3px] w-[30px] h-[44px] relative z-10 bg-white border border-r-0 border-[#c3c7ca] flex items-center justify-center">
      <svg width="24" height="30" viewBox="0 0 24 30"><polygon points="1,6 7,2 14,5 8,9" fill="#a9dcec" /><polygon points="1,6 8,9 8,16 1,13" fill="#2ea4c8" /><polygon points="8,9 14,5 14,12 8,16" fill="#15749c" /><path d="M14 13 H23 M5 20 V28 M5 24 H11" stroke="#666" fill="none" /><rect x="11" y="20" width="7" height="6" fill="#fff" stroke="#666" /></svg>
    </div>
    <svg width="24" height="20" viewBox="0 0 24 20" className="mt-[14px]"><rect x="7" y="1" width="10" height="7" fill="#1f7ea6" /><rect x="0" y="12" width="10" height="7" fill="#2a8fb8" /><rect x="14" y="12" width="10" height="7" fill="#dbeaf1" stroke="#7aa9c0" /><path d="M12 8 V10 M5 12 V10 H19 V12" fill="none" stroke="#6a8a9c" /></svg>
    <svg width="24" height="24" viewBox="0 0 24 24" className="mt-[26px]"><rect x=".5" y=".5" width="23" height="23" fill="#eaf3f7" stroke="#4e91b2" /><rect x="1" y="1" width="22" height="3" fill="#2e86ae" /><polygon points="4,11 12,6 20,10 12,15" fill="#ffe37b" /><polygon points="4,11 12,15 12,21 4,17" fill="#f0a818" /><polygon points="12,15 20,10 20,16 12,21" fill="#f8c63a" /></svg>
    <svg width="24" height="24" viewBox="0 0 24 24" className="mt-[21px]"><rect width="24" height="24" fill="#bfe3f2" /><circle cx="17" cy="6" r="4" fill="#f4b52a" /><path d="M0 14 L7 8 L13 14 L24 10 V24 H0Z" fill="#2b9cc6" /><path d="M1 17 H10 M7 13 L11 17 L7 21" fill="none" stroke="#ee7a1c" strokeWidth="2.4" /></svg>
    <svg width="24" height="24" viewBox="0 0 24 24" className="mt-[27px]"><circle cx="15" cy="6" r="5" fill="#f4b52a" /><circle cx="10" cy="7" r="5.4" fill="#2ba0c4" /><path d="M1 22 C2 13 7 12 10 12 C14 12 18 13 19 22Z" fill="#1587ad" /><path d="M19 13 C22 15 23 18 23 22 H20" fill="#f4b52a" /></svg>
  </div>
);

const ManagerPanel = () => (
  <div className="w-[360px] shrink-0 flex flex-col">
    <div className="h-[22px] shrink-0 flex items-center justify-between pl-[4px] pr-[7px]">
      <span className="text-xs text-[#333]">管理器</span>
      <div className="flex items-center gap-[8px]">
        <svg width="10" height="10" viewBox="0 0 10 10"><rect x=".5" y=".5" width="9" height="9" fill="none" stroke="#8a8f94" /><rect x="3" y="3" width="4" height="3" fill="none" stroke="#8a8f94" /></svg>
        <svg width="12" height="10" viewBox="0 0 12 10"><path d="M1 0 L11 10 M11 0 L1 10" stroke="#a8acb0" strokeWidth="2.2" /></svg>
      </div>
    </div>
    <div className="flex-1 flex min-h-0">
      {SIDE_ICONS}
      <div className="w-[327px] ml-[2px] border border-[#c3c7ca] flex flex-col p-[1px] pb-0">
        <div className="flex h-[24px] gap-[2px] shrink-0 mb-[1px] ml-[1px]">
          <Combo text="显示常用" className="w-[147px] h-[24px]" />
          <div className="w-[146px] h-[24px] bg-white border border-[#c3c7ca]" />
          <div className="w-[24px] h-[24px] bg-[#f6f7f7] border border-[#c3c7ca] flex items-center justify-center">
            <svg width="16" height="16" viewBox="0 0 16 16"><path d="M0 0 H16 L10 7 V16 H6 V7Z" fill="#1990b8" /></svg>
          </div>
        </div>
        <div className="mx-[1px] flex-1 min-h-0 border border-[#c3c7ca] flex flex-col"><TreeRows /></div>
        <div className="mx-[1px] mt-[2px] h-[22px] shrink-0 bg-[#fbfbfb] border border-[#c3c7ca] border-b-2 flex items-center pl-[5px]">
          <svg width="8" height="10" viewBox="0 0 8 10"><polygon points="0,0 8,5 0,10" fill="#555" /></svg>
          <span className="ml-[6px] text-xs font-bold text-[#333]">回放</span>
        </div>
      </div>
    </div>
  </div>
);

const P = (props: { points: string; fill: string }) => (
  <polygon points={props.points} fill={props.fill} stroke="#150f00" strokeWidth="1" strokeLinejoin="round" />
);

const TOP = '#dca509';
const LOW = '#cf9a00';
const SIDE = '#bf9000';
const SHADE = '#b0840e';
const DARK = '#987000';

const Model = () => (
  <svg width="1559" height="816" viewBox="360 194 1559 816" className="absolute inset-0">
    {/* left arm */}
    <P points="607,647 931,885 927,880 934,832 624,607" fill={LOW} />
    <P points="624,607 657,580 943,788 934,832" fill={TOP} />
    <path d="M607 647 L927 880" stroke="#150f00" strokeWidth="1.2" transform="translate(0 1)" />
    {/* first riser */}
    <P points="902,583 932,569 982,777 950,786" fill={SIDE} />
    <P points="932,569 987,593 1037,803 982,777" fill={TOP} />
    <P points="987,593 1013,632 1063,841 1037,803" fill={DARK} />
    {/* first corner */}
    <P points="934,832 943,788 982,777 1037,803" fill={TOP} />
    <P points="934,832 1037,803 1063,841 927,880" fill={SHADE} />
    <P points="927,880 1063,841 1037,849 931,885" fill={SIDE} />
    {/* top bar 1 */}
    <P points="932,569 1085,524 1068,570 987,593" fill={TOP} />
    <P points="987,593 1068,570 1058,619 1013,632" fill={SHADE} />
    <P points="1013,632 1058,619 1062,623 1013,637" fill={SIDE} />
    {/* diagonal 2 */}
    <P points="1085,524 1234,690 1217,737 1068,570" fill={TOP} />
    <P points="1068,570 1217,737 1206,787 1058,619" fill={LOW} />
    <P points="1085,524 1092,527 1236,689 1234,690" fill={DARK} />
    {/* second corner */}
    <P points="1217,737 1234,690 1362,653 1389,646 1438,672" fill={TOP} />
    <P points="1217,737 1438,672 1461,712 1206,787" fill={SHADE} />
    <P points="1206,787 1461,712 1438,725 1213,790" fill={SIDE} />
    {/* second riser */}
    <P points="1358,369 1384,356 1389,646 1362,653" fill="#b08400" />
    <P points="1384,356 1434,382 1438,672 1389,646" fill={TOP} />
    <P points="1434,382 1456,420 1461,712 1438,672" fill={DARK} />
    <P points="1384,356 1470,331 1460,374 1434,382" fill={TOP} />
    <P points="1434,382 1460,374 1455,420" fill={SHADE} />
    {/* right arm */}
    <P points="1456,425 1717,615 1732,627 1456,420" fill={DARK} />
    <P points="1470,331 1767,547 1734,573 1460,374" fill={TOP} />
    <P points="1460,374 1734,573 1717,615 1455,420" fill={LOW} />
    <P points="1734,573 1767,547 1783,560 1766,600 1732,627 1717,615" fill="#4a3800" />
    {/* sketch plane at the far end */}
    <g fill="none" stroke="#b5762a" strokeWidth="1">
      <path d="M657 580 L667 573 L666 620 L612 666 L613 617 L624 607" opacity=".35" />
      <path d="M657 580 L667 573 L667 600 M613 617 L621 611 M612 666 L620 658" opacity=".9" />
    </g>
    {/* datum triad on the model */}
    <g opacity=".75">
      <path d="M923 812 L935 830" stroke="#a6d23a" strokeWidth="3" />
      <polygon points="919,805 928,813 921,818" fill="#a6d23a" />
      <path d="M937 836 L970 828" stroke="#d98a3a" strokeWidth="3" />
      <polygon points="968,823 981,826 969,833" fill="#d98a3a" />
      <path d="M939 790 L936 826" stroke="#5a4400" strokeWidth="1.4" />
      <circle cx="936" cy="815" r="5" fill="#b5823a" />
      <ellipse cx="939" cy="796" rx="3" ry="5" fill="#a8660f" />
      <path d="M924 785 L948 812 M924 785 V812 H975 V802 L960 797 L940 802" fill="none" stroke="#b5a27a" strokeWidth=".6" />
    </g>
    <circle cx="939" cy="811" r="2" fill="#1010d0" />
    <text x="936" y="786" fontSize="15" fill="#b5762a" fontFamily="Liberation Sans">Z</text>
    {/* world axes */}
    <path d="M416 953 L403 925" stroke="#10c010" strokeWidth="4" />
    <polygon points="399,919 410,929 400,933" fill="#0a9a0a" />
    <path d="M417 953 V932" stroke="#0000c8" strokeWidth="5" />
    <ellipse cx="417" cy="932" rx="6" ry="7" fill="#0808d0" />
    <path d="M418 953 L448 943" stroke="#e01010" strokeWidth="4" />
    <polygon points="440,938 461,940 446,950" fill="#d80808" />
    <text x="390" y="919" fontSize="17" fill="#22dd22" fontFamily="Liberation Sans">Y</text>
    <text x="414" y="925" fontSize="17" fill="#2222cc" fontFamily="Liberation Sans">Z</text>
    <text x="465" y="944" fontSize="17" fill="#dd2222" fontFamily="Liberation Sans">X</text>
  </svg>
);

const Drop = () => <Caret className="ml-[2px] text-[#555]" />;

const ViewTools = () => (
  <div className="absolute left-[503px] top-[3px] h-[20px] flex items-center">
    <svg width="16" height="17" viewBox="0 0 16 17"><rect x="5" y="1" width="10" height="15" rx="1" fill="#fff" stroke="#1b6f96" strokeWidth="2" /><path d="M1 8.5 H9" stroke="#e01818" strokeWidth="3" /><polygon points="0,8.5 5,4 5,13" fill="#e01818" /></svg>
    <svg width="18" height="18" viewBox="0 0 18 18" className="ml-[9px]"><circle cx="5" cy="4" r="3" fill="#e7c79a" stroke="#888" /><path d="M4 8 L14 16 M3 12 L12 16" stroke="#4da54a" strokeWidth="2.4" /></svg>
    <Drop />
    <svg width="12" height="15" viewBox="0 0 12 15" className="ml-[13px]"><path d="M9 1 L2 12" stroke="#d58f7c" strokeWidth="3" /><path d="M2 12 L1 14" stroke="#888" strokeWidth="2" /></svg>
    <svg width="16" height="16" viewBox="0 0 16 16" className="ml-[10px]"><polygon points="1,5 8,1 15,5 8,9" fill="#f7d43a" /><polygon points="1,5 8,9 8,16 1,12" fill="#6cc0de" /><polygon points="8,9 15,5 15,12 8,16" fill="#2c90b8" /></svg>
    <svg width="17" height="18" viewBox="0 0 17 18" className="ml-[8px]"><polygon points="1,5 8,1 16,4 9,8" fill="#85d2e8" /><polygon points="1,5 9,8 9,17 1,13" fill="#38a9cc" /><polygon points="9,8 16,4 16,12 9,17" fill="#0e6d96" /></svg>
    <Drop />
    <svg width="18" height="18" viewBox="0 0 18 18" className="ml-[9px]"><path d="M1 5 L9 1 L17 5 V13 L9 17 L1 13Z M1 5 L9 9 L17 5 M9 9 V17" fill="#fff" stroke="#8f9599" /></svg>
    <Drop />
    <svg width="18" height="18" viewBox="0 0 18 18" className="ml-[11px]"><polygon points="9,1 17,7 14,16 4,16 1,7" fill="#f0a52c" stroke="#b3661a" /><path d="M9 1 V16 M1 7 L14 16 M17 7 L4 16" stroke="#b3661a" /></svg>
    <Drop />
    <svg width="16" height="18" viewBox="0 0 16 18" className="ml-[10px]"><rect x="1" y="1" width="14" height="16" fill="#d8e6ec" stroke="#4f8ca8" strokeWidth="1.4" /><ellipse cx="8" cy="9" rx="5" ry="6" fill="#f3e27e" stroke="#b89a3a" strokeWidth="1.4" /></svg>
    <Drop />
    <svg width="15" height="17" viewBox="0 0 15 17" className="ml-[13px]"><rect x="1" y="1" width="13" height="15" fill="#f2f7fa" stroke="#8daab8" /><rect x="8" y="6" width="3" height="3" fill="#2b8ab0" /><rect x="4" y="10" width="3" height="3" fill="#2b8ab0" /></svg>
    <svg width="15" height="18" viewBox="0 0 15 18" className="ml-[10px]"><path d="M2 1 V13 M13 1 V13 M2 7 H13" stroke="#3f86ad" strokeWidth="1.5" /><rect x="1" y="14" width="13" height="2.4" fill="#c8303a" /></svg>
    <Drop />
    <svg width="17" height="19" viewBox="0 0 17 19" className="ml-[11px]"><rect x="1" y="1" width="15" height="15" rx="1" fill="#8a8f94" /><rect x="3" y="4" width="11" height="5" fill="#b9c3c9" /><rect x="5" y="16" width="7" height="2" fill="#555" /></svg>
    <Drop />
    <div className="ml-[13px] w-[15px] h-[7px] bg-black" />
    <div className="ml-[9px] w-[16px] h-[16px] bg-[#f7b000] border border-[#222]" />
    <svg width="17" height="15" viewBox="0 0 17 15" className="ml-[8px]"><polygon points="1,5 9,1 16,6 9,14" fill="#58bcd0" /><polygon points="1,5 9,9 9,14" fill="#bcd0a8" /></svg>
    <Drop />
    <div className="ml-[10px] w-[114px] h-[21px] bg-white border border-[#c3c7ca] flex items-center pl-[6px] pr-[6px]">
      <svg width="10" height="16" viewBox="0 0 10 16"><path d="M5 1 C9 1 10 5 8 8 L7 12 H3 L2 8 C0 5 1 1 5 1Z" fill="#fff6b0" stroke="#d5b02a" /><rect x="3" y="12" width="4" height="3" fill="#9a9a9a" /></svg>
      <svg width="14" height="16" viewBox="0 0 14 16" className="ml-[3px]"><ellipse cx="7" cy="8" rx="6" ry="7" fill="#f3e04a" stroke="#3f8d9c" strokeWidth="1.2" /></svg>
      <span className="ml-[2px] text-xs text-[#222] flex-1">图层0000</span>
      <Caret />
    </div>
  </div>
);

const Viewport = () => (
  <div className="flex-1 flex flex-col min-w-0">
    <div className="h-[23px] shrink-0 flex items-end relative">
      <div className="ml-[1px] w-[120px] h-[22px] -mb-px relative z-10 bg-[#fdfdfd] border border-b-0 border-[#c3c7ca] flex items-center pl-[14px] text-xs text-[#333]">
        <svg width="10" height="10" viewBox="0 0 10 10" className="shrink-0"><path d="M5 0 V10 M0 5 H10" stroke="#8a6a2a" strokeWidth="2" /></svg>
        <span className="ml-[6px]">零件001.Z3</span>
        <svg width="10" height="10" viewBox="0 0 10 10" className="ml-[9px] shrink-0"><path d="M1 1 L9 9 M9 1 L1 9" stroke="#7d6a3a" strokeWidth="2" /></svg>
      </div>
      <svg width="11" height="11" viewBox="0 0 11 11" className="ml-[7px] mb-[5px]"><path d="M5.5 0 V11 M0 5.5 H11" stroke="#a8acb0" strokeWidth="1.5" /></svg>
      <svg width="10" height="9" viewBox="0 0 10 9" className="absolute right-[5px] top-[8px]"><path d="M1 1 H9" stroke="#888" strokeWidth="1.4" /><polygon points="1,4 9,4 5,8.5" fill="#888" /></svg>
    </div>
    <div className="flex-1 relative border-t border-[#c3c7ca] bg-gradient-to-b from-white to-[#9f9f9f] overflow-hidden">
      <Model />
      <div className="relative pl-[20px] pt-[5px] text-xs leading-[15px] text-[#222] font-['Noto_Sans','Noto_Sans_CJK_SC',sans-serif]">
        <p>按下&lt;F2&gt;动态的观察</p>
        <p>&lt;F8&gt;或者&lt;Shift-roll&gt; 查找下一个有效的过滤器设置.</p>
      </div>
      <ViewTools />
      <span className="absolute left-[5px] bottom-[-1px] text-[18px] leading-[24px] text-[#222]">167.213 mm</span>
    </div>
  </div>
);

const StatusBar = () => (
  <div className="h-[30px] shrink-0 flex items-center relative border-t border-[#c3c7ca]">
    <span className="ml-[6px] mt-[2px] text-xs text-[#444]">选择命令或实体</span>
    <div className="absolute left-[1466px] top-[4px] w-px h-[25px] bg-[#8a8f94]" />
    <div className="absolute left-[1482px] top-[6px] w-[21px] h-[20px] bg-[#fbe39a] border border-[#d9b04e] flex items-center justify-center">
      <svg width="14" height="14" viewBox="0 0 14 14"><rect x=".5" y=".5" width="13" height="13" fill="#eef2f6" stroke="#4f76a8" /><rect x="1" y="1" width="12" height="2.4" fill="#6d8fbc" /><path d="M5 5 H11 M8 5 V12" stroke="#b3282c" strokeWidth="2" /></svg>
    </div>
    <svg width="17" height="14" viewBox="0 0 17 14" className="absolute left-[1513px] top-[9px]"><rect x=".5" y=".5" width="16" height="10" fill="#35b7d8" stroke="#8a9aa2" /><rect x="5" y="11" width="7" height="3" fill="#555" /></svg>
    <svg width="14" height="14" viewBox="0 0 14 14" className="absolute left-[1543px] top-[9px]"><rect x=".5" y=".5" width="13" height="13" fill="#f1f4f8" stroke="#4f76a8" /><rect x="1" y="1" width="12" height="2.4" fill="#4f76a8" /><path d="M3 6 H11 M3 8 H11 M3 10 H9" stroke="#7f8fa6" /></svg>
    <div className="absolute left-[1569px] top-[5px] right-0 h-[22px] bg-white border border-[#c3c7ca]" />
  </div>
);

export default function App() {
  return (
    <div className={`w-full h-screen flex flex-col overflow-hidden bg-[#e2e5e8] ${FONT}`}>
      <Defs />
      <TopBar />
      <TabBar />
      <Ribbon />
      <Toolbar />
      <div className="flex-1 flex min-h-0">
        <ManagerPanel />
        <Viewport />
      </div>
      <StatusBar />
    </div>
  );
}
